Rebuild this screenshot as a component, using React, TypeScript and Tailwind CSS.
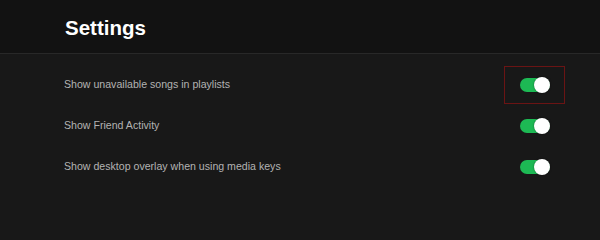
import React from "react";

const rows = [
  { label: "Show unavailable songs in playlists", highlight: true },
  { label: "Show Friend Activity", highlight: false },
  { label: "Show desktop overlay when using media keys", highlight: false },
];

function Toggle() {
  return (
    <div className="relative w-[30px] h-[14px] rounded-full bg-[#1db954]">
      <div className="absolute right-0 top-1/2 -translate-y-1/2 w-[16px] h-[16px] rounded-full bg-white shadow-[0_0_2px_rgba(0,0,0,0.5)]" />
    </div>
  );
}

export default function App() {
  return (
    <div
      className="w-full min-h-screen bg-[#181818] overflow-hidden"
      style={{ fontFamily: '"Liberation Sans", Arial, sans-serif' }}
    >
      <div className="w-[600px]">
        <div className="h-[54px] bg-[#121212] border-b border-[#282828] flex items-center pl-[65px]">
          <h1 className="text-white font-bold text-[20.5px] leading-none mt-[3px]">Settings</h1>
        </div>
        <div className="pt-[10px] flex flex-col">
          {rows.map((r) => (
            <div key={r.label} className="h-[41px] flex items-center justify-between pl-[64px] pr-[35px]">
              <span className="text-[#b3b3b3] text-[10.6px]">{r.label}</span>
              <div
                className={
                  "w-[61px] h-[38px] flex items-center justify-end pr-[14px] border " +
                  (r.highlight ? "border-[#6b1414]" : "border-transparent")
                }
              >
                <Toggle />
              </div>
            </div>
          ))}
        </div>
      </div>
    </div>
  );
}
